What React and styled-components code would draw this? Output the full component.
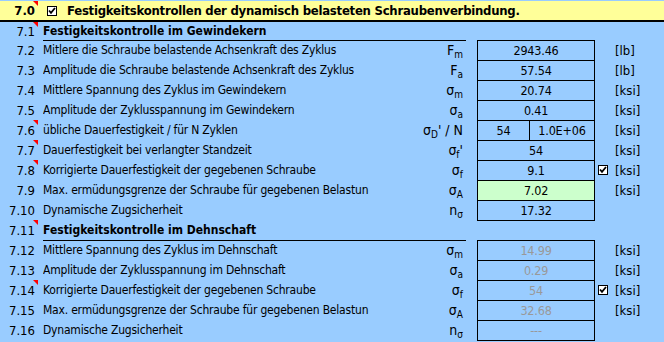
import styled, { createGlobalStyle } from "styled-components";

const GlobalStyle = createGlobalStyle`
  html, body {
    margin: 0;
    padding: 0;
    background: #99ccff;
  }
  body {
    font-family: "DejaVu Sans Condensed", "DejaVu Sans", sans-serif;
    font-size: 12px;
    letter-spacing: -0.2px;
    color: #000;
  }
`;

const rows = [
  { n: "7.1", section: "Festigkeitskontrolle im Gewindekern", mark: true, h: 18 },
  { n: "7.2", label: "Mitlere die Schraube belastende Achsenkraft des Zyklus", s: "F", sub: "m", v: "2943.46", u: "[lb]" },
  { n: "7.3", label: "Amplitude die Schraube belastende Achsenkraft des Zyklus", s: "F", sub: "a", v: "57.54", u: "[lb]" },
  { n: "7.4", label: "Mittlere Spannung des Zyklus im Gewindekern", s: "σ", sub: "m", v: "20.74", u: "[ksi]" },
  { n: "7.5", label: "Amplitude der Zyklusspannung im Gewindekern", s: "σ", sub: "a", v: "0.41", u: "[ksi]" },
  { n: "7.6", label: "übliche Dauerfestigkeit / für N Zyklen", s: "σ", sub: "D", after: "' / N", split: ["54", "1.0E+06"], u: "[ksi]", mark: true },
  { n: "7.7", label: "Dauerfestigkeit bei verlangter Standzeit", s: "σ", sub: "f", after: "'", v: "54", u: "[ksi]", mark: true },
  { n: "7.8", label: "Korrigierte Dauerfestigkeit der gegebenen Schraube", s: "σ", sub: "f", v: "9.1", u: "[ksi]", check: true, mark: true },
  { n: "7.9", label: "Max. ermüdungsgrenze der Schraube für gegebenen Belastun", s: "σ", sub: "A", v: "7.02", u: "[ksi]", green: true },
  { n: "7.10", label: "Dynamische Zugsicherheit", s: "n", sub: "σ", v: "17.32", last: true },
  { n: "7.11", section: "Festigkeitskontrolle im Dehnschaft", mark: true },
  { n: "7.12", label: "Mittlere Spannung des Zyklus im Dehnschaft", s: "σ", sub: "m", v: "14.99", u: "[ksi]", grey: true },
  { n: "7.13", label: "Amplitude der Zyklusspannung im Dehnschaft", s: "σ", sub: "a", v: "0.29", u: "[ksi]", grey: true },
  { n: "7.14", label: "Korrigierte Dauerfestigkeit der gegebenen Schraube", s: "σ", sub: "f", v: "54", u: "[ksi]", grey: true, check: true, mark: true },
  { n: "7.15", label: "Max. ermüdungsgrenze der Schraube für gegebenen Belastun", s: "σ", sub: "A", v: "32.68", u: "[ksi]", grey: true },
  { n: "7.16", label: "Dynamische Zugsicherheit", s: "n", sub: "σ", v: "---", grey: true, last: true },
];

function CheckBox() {
  return (
    <Box>
      <svg width="8" height="8" viewBox="0 0 8 8">
        <path d="M1 3.5 L3 5.8 L7 1" fill="none" stroke="#000" strokeWidth="1.8" />
      </svg>
    </Box>
  );
}

export default function App() {
  return (
    <Sheet>
      <GlobalStyle />
      <TitleRow>
        <Num $mark>7.0</Num>
        <TitleCheck>
          <CheckBox />
        </TitleCheck>
        <Title>Festigkeitskontrollen der dynamisch belasteten Schraubenverbindung.</Title>
      </TitleRow>

      {rows.map((r) => (
        <Row key={r.n} $h={r.h}>
          <Num $mark={r.mark}>{r.n}</Num>
          {r.section ? (
            <Section>{r.section}</Section>
          ) : (
            <>
              <Label>{r.label}</Label>
              <Symbol>
                {r.s}
                <Sub>{r.sub}</Sub>
                {r.after}
              </Symbol>
              {r.split ? (
                <Value $last={r.last}>
                  <Half>{r.split[0]}</Half>
                  <Half $divide>{r.split[1]}</Half>
                </Value>
              ) : (
                <Value $last={r.last} $green={r.green} $grey={r.grey}>
                  {r.v}
                </Value>
              )}
              <CheckCell>{r.check && <CheckBox />}</CheckCell>
              <Unit>{r.u}</Unit>
            </>
          )}
        </Row>
      ))}
    </Sheet>
  );
}

const Sheet = styled.div`
  width: 664px;
  height: 342px;
  overflow: hidden;
  background: #99ccff;
`;

const TitleRow = styled.div`
  margin-top: 1px;
  height: 19px;
  background: #ffff99;
  border-bottom: 2px solid #000;
  display: flex;
  align-items: center;
  font-weight: bold;
  font-size: 13px;
  letter-spacing: -0.25px;
`;

const Num = styled.div`
  position: relative;
  width: 38px;
  height: 100%;
  box-sizing: border-box;
  padding-right: 3px;
  display: flex;
  align-items: center;
  justify-content: flex-end;
  grid-column: 1;
  font-size: 13px;
  letter-spacing: 0;

  &::after {
    content: "";
    display: ${(p) => (p.$mark ? "block" : "none")};
    position: absolute;
    top: 0;
    right: 0;
    width: 0;
    height: 0;
    border-left: 5px solid transparent;
    border-top: 5px solid #ff0000;
  }
`;

const TitleCheck = styled.div`
  margin-left: 9px;
  display: flex;
`;

const Title = styled.div`
  margin-left: 10px;
  white-space: nowrap;
`;

const Row = styled.div`
  display: grid;
  grid-template-columns: 38px 5px 340px 83px 11px 118px 20px 1fr;
  grid-template-rows: 100%;
  height: ${(p) => p.$h || 20}px;
  align-items: center;

  & > * {
    grid-row: 1;
  }
`;

const Label = styled.div`
  grid-column: 3 / span 2;
  white-space: nowrap;
  overflow: hidden;
`;

const Section = styled.div`
  grid-column: 3 / span 2;
  align-self: stretch;
  display: flex;
  align-items: center;
  font-weight: bold;
  letter-spacing: 0;
  box-shadow: 0 1px 0 #000;
  white-space: nowrap;
`;

const Symbol = styled.div`
  grid-column: 4;
  display: flex;
  align-items: baseline;
  justify-content: flex-end;
  padding-right: 3px;
  white-space: nowrap;
  font-size: 14px;
  letter-spacing: 0;
`;

const Sub = styled.span`
  font-size: 10px;
  position: relative;
  top: 3px;
`;

const Value = styled.div`
  grid-column: 6;
  align-self: stretch;
  box-sizing: border-box;
  border: 1px solid #000;
  border-bottom: none;
  box-shadow: ${(p) => (p.$last ? "0 1px 0 #000" : "none")};
  background: ${(p) => (p.$green ? "#ccffcc" : "transparent")};
  color: ${(p) => (p.$grey ? "#999999" : "#000")};
  display: flex;
  align-items: center;
  justify-content: center;
  font-size: 12.5px;
`;

const Half = styled.div`
  flex: ${(p) => (p.$divide ? "0 0 64px" : "1")};
  height: 100%;
  display: flex;
  align-items: center;
  justify-content: center;
  border-left: ${(p) => (p.$divide ? "1px solid #000" : "none")};
`;

const CheckCell = styled.div`
  grid-column: 7;
  padding-left: 3px;
  display: flex;
`;

const Box = styled.span`
  width: 10px;
  height: 10px;
  box-sizing: border-box;
  border: 1px solid #000;
  background: #fff;
  display: flex;
  align-items: center;
  justify-content: center;
`;

const Unit = styled.div`
  grid-column: 8;
  white-space: nowrap;
  font-size: 13px;
  letter-spacing: 0;
`;
